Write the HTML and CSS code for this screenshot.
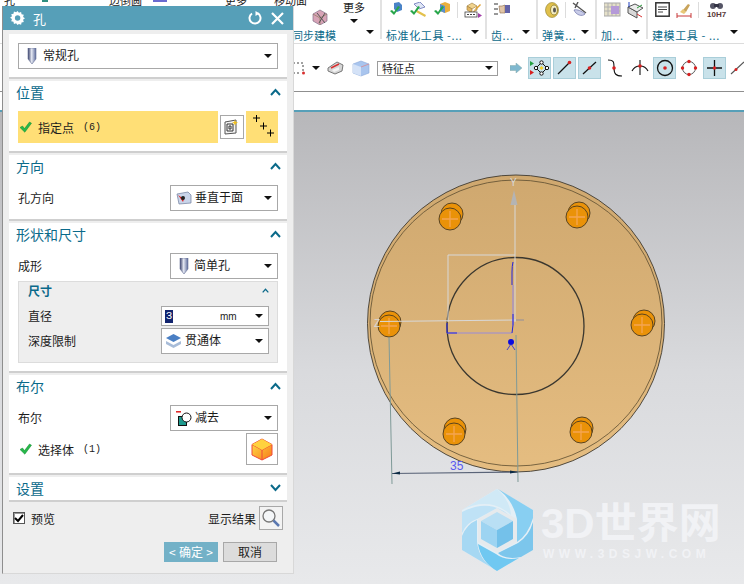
FILE: index.html
```html
<!DOCTYPE html>
<html lang="zh">
<head>
<meta charset="utf-8">
<title>孔</title>
<link rel="stylesheet" href="styles.css">
</head>
<body>
<svg class="defs" width="0" height="0" aria-hidden="true">
  <defs>
    <linearGradient id="drill" x1="0" x2="1" y1="0" y2="0"><stop offset="0" stop-color="#39406a"/><stop offset=".45" stop-color="#e4e8f2"/><stop offset="1" stop-color="#5c6a9a"/></linearGradient>
    <linearGradient id="view" x1="0" x2="0" y1="0" y2="1"><stop offset="0" stop-color="#b7b7ba"/><stop offset=".55" stop-color="#d9dadd"/><stop offset="1" stop-color="#e8e9eb"/></linearGradient>
    <linearGradient id="disc" x1="0" x2="0" y1="0" y2="1"><stop offset="0" stop-color="#cfa86f"/><stop offset="1" stop-color="#e5bd81"/></linearGradient>
    <linearGradient id="cubeface" x1="0" x2="1" y1="0" y2="1"><stop offset="0" stop-color="#ffe14a"/><stop offset="1" stop-color="#f77a18"/></linearGradient>
    <symbol id="i-drill" viewBox="0 0 10 16"><path d="M1 0h8v11l-4 5-4-5z" fill="url(#drill)" stroke="#6a7398" stroke-width=".6"/></symbol>
    <symbol id="i-check" viewBox="0 0 13 12"><path d="M1 6.500l2.500-1.500 2 2.600L10.500 1 12.500 2.200 5.800 11.200z" fill="#27b84a" stroke="#128a30" stroke-width=".5"/></symbol>
    <symbol id="i-up" viewBox="0 0 11 8"><path d="M1 7l4.500-5L10 7" fill="none" stroke="#0b6a8a" stroke-width="2"/></symbol>
  </defs>
</svg>

<div class="app">
  <header class="ribbon">
    <section class="rgroup rgroup-first">
      <div class="rgroup-body">
        <div class="first-left">
          <div class="clip-row">
            <span class="clip-a">孔</span>
            <span class="clip-mark"></span>
            <span class="clip-b">边倒圆</span>
            <span class="clip-flag"></span>
            <span class="clip-c">更多</span>
            <span class="clip-d">移动面</span>
          </div>
          <svg class="face-icon" width="18" height="17" viewBox="0 0 18 17"><path d="M2 6l7-4 7 4v7l-7 4-7-4z" fill="#d7a3b6" stroke="#85708a" stroke-width=".7"/><path d="M2 6l7 4 7-4M9 10v7" fill="none" stroke="#8a7b5c" stroke-width=".7"/><path d="M6 5l8 10M14 5L8 15" stroke="#555" stroke-width="1"/></svg>
        </div>
        <div class="more-col"><span>更多</span><i class="caret"></i></div>
      </div>
      <div class="rlabel rlabel-first"><span>同步建模</span><i class="caret"></i></div>
    </section>

    <section class="rgroup rg-std">
      <div class="rgroup-body icons">
        <svg width="14" height="15" viewBox="0 0 14 15"><path d="M5 1l5-1 3 3v5l-5 2-3-3z" fill="#4a83c7"/><path d="M1 9l2-1 2 2 4-6 2 1-6 8z" fill="#27a64a"/></svg>
        <svg width="18" height="15" viewBox="0 0 18 15"><path d="M5 2l6-2 5 5-6 2z" fill="#dfe6f5" stroke="#6a74b8" stroke-width=".8"/><path d="M8 8l9 5-1 2-9-5z" fill="#e3c14c"/><path d="M1 9l2-1 2 2 4-6 2 1-6 8z" fill="#27a64a"/></svg>
        <svg width="18" height="15" viewBox="0 0 18 15"><path d="M7 2l5-2 5 2v7l-5 2-5-2z" fill="#e9b03e"/><path d="M7 2l5 2v7l-5-2z" fill="#5a8fd0"/><path d="M1 9l2-1 2 2 4-6 2 1-6 8z" fill="#27a64a"/></svg>
        <i class="rsep"></i>
        <svg width="18" height="16" viewBox="0 0 18 16"><path d="M3 4l5-3 5 3-5 3z" fill="#f0d28c" stroke="#9c7b3a" stroke-width=".6"/><path d="M3 4v4l5 3V7zM13 4v4l-5 3" fill="#e3b763" stroke="#9c7b3a" stroke-width=".6"/><rect x="1" y="10" width="12" height="5" fill="#fff" stroke="#444" stroke-width=".8"/><path d="M3 12.500h2M6 12.500h2M9 12.500h2" stroke="#444"/><path d="M14 11l4 2.500-4 2.500z" fill="#a33fa8"/><path d="M12 6l4-4 1 1-4 4z" fill="#e0a030"/></svg>
      </div>
      <div class="rlabel"><span>标准化工具 -...</span><i class="caret"></i></div>
    </section>

    <section class="rgroup rg-gear">
      <div class="rgroup-body icons">
        <svg width="16" height="14" viewBox="0 0 16 14"><path d="M0 2h4M0 7h4M0 12h4" stroke="#333"/><path d="M5 4h3l3-1v8H6z" fill="#e2c6a8" stroke="#8a6a4a" stroke-width=".6"/><rect x="11" y="3" width="5" height="8" fill="#6464a8"/></svg>
      </div>
      <div class="rlabel"><span>齿...</span><i class="caret"></i></div>
    </section>

    <section class="rgroup rg-spring">
      <div class="rgroup-body icons">
        <svg width="14" height="16" viewBox="0 0 14 16"><ellipse cx="7" cy="8" rx="6.500" ry="7.500" fill="#e0c04c" stroke="#8a7a2a" stroke-width=".6"/><ellipse cx="9" cy="8" rx="3.500" ry="5" fill="#f4ecc0" stroke="#8a7a2a" stroke-width=".8"/><ellipse cx="9.500" cy="8" rx="1.500" ry="2.500" fill="#555"/></svg>
        <i class="rsep"></i>
        <svg width="15" height="15" viewBox="0 0 15 15"><path d="M1 1l13 10M6 0L3 6" stroke="#555" stroke-width="1.400"/><path d="M2 8c3-1 8 1 11 4-3 3-9 1-11-4z" fill="#c9cce8" stroke="#6a70a8" stroke-width=".7"/></svg>
      </div>
      <div class="rlabel"><span>弹簧...</span><i class="caret"></i></div>
    </section>

    <section class="rgroup rg-add">
      <div class="rgroup-body icons">
        <svg width="17" height="16" viewBox="0 0 17 16"><rect x="0" y="1" width="16" height="13" fill="#e5e0c8" stroke="#a8a8a8"/><path d="M4 1v13M8 1v13M12 1v13M0 5h16M0 9h16" stroke="#b0b0b0"/><rect x="7" y="4" width="8" height="8" fill="#b59ad8"/></svg>
        <svg width="17" height="17" viewBox="0 0 17 17"><path d="M1 5l9 5v6L1 11z" fill="#d8d8d8" stroke="#555"/><path d="M1 5l7-3 8 4-6 4z" fill="#ececec" stroke="#555"/><path d="M2 5V0" stroke="#2040c0"/><path d="M10 6l5-3" stroke="#2a9a3a"/><path d="M10 12l5 3" stroke="#d83030"/></svg>
      </div>
      <div class="rlabel"><span>加...</span><i class="caret"></i></div>
    </section>

    <section class="rgroup rg-model">
      <div class="rgroup-body icons">
        <svg width="15" height="15" viewBox="0 0 15 15"><rect x=".8" y=".8" width="13.400" height="13.400" fill="#fff" stroke="#333" stroke-width="1.500"/><path d="M3 5h9M3 7.500h9M3 10h5" stroke="#444"/></svg>
        <svg width="16" height="16" viewBox="0 0 16 16"><path d="M1 14h14M1 11v6M15 11v6" stroke="#c83a3a"/><path d="M7 8l5-6 2 1-4 7z" fill="#c8a35a"/><path d="M4 10l3-3 3 3-2 2z" fill="#e8c878"/></svg>
        <i class="rsep"></i>
        <div class="binoc"><svg width="13" height="8" viewBox="0 0 13 8"><circle cx="3" cy="4" r="3" fill="#556"/><circle cx="10" cy="4" r="3" fill="#556"/><rect x="4" y="2" width="5" height="3" fill="#334"/></svg><span>10H7</span></div>
      </div>
      <div class="rlabel"><span>建模工具 - ...</span><i class="caret"></i></div>
    </section>
  </header>

  <nav class="toolbar">
    <svg class="t-dash" width="12" height="13" viewBox="0 0 12 13"><path d="M0 1h10v10M0 11h8" fill="none" stroke="#444" stroke-dasharray="2 2"/><circle cx="10.500" cy="11" r="1.500" fill="#d83030"/></svg>
    <i class="caret t-caret"></i>
    <svg class="t-filter" width="17" height="14" viewBox="0 0 17 14"><path d="M1 7l9-6 6 3-1 6-7 3-7-3z" fill="#d6d6d6" stroke="#777"/><path d="M4 7l8-4" stroke="#d83030" stroke-width="1.400"/><path d="M5 9l7-3v3l-5 2z" fill="#f4f4f4"/></svg>
    <svg class="t-box" width="18" height="17" viewBox="0 0 18 17"><path d="M1 4l8-3 8 3v9l-8 3-8-3z" fill="#a9c5ee" stroke="#8aa8d8" stroke-width=".6"/><path d="M1 4l8 3v9l-8-3z" fill="#d4e2f7"/><path d="M9 7l8-3" stroke="#d88a90" stroke-width=".8"/></svg>
    <div class="t-select"><span>特征点</span><i class="caret"></i></div>
    <svg class="t-arrow" width="12" height="10" viewBox="0 0 12 10"><path d="M0 2.500h6V0l6 5-6 5V7.500H0z" fill="#7fb8cf" stroke="#8aa" stroke-width=".5"/></svg>
    <div class="tools">
      <div class="tool on"><svg width="23" height="22" viewBox="0 0 23 22"><path d="M2 4l4 2.500L2 9z" fill="#22a040"/><path d="M2 13l4 2.500L2 18z" fill="#d82020"/><path d="M13.500 5.500L19 11l-5.500 5.500L8 11z" fill="none" stroke="#111" stroke-width="1"/><path d="M13.500 9l2 2-2 2-2-2z" fill="#f4d020"/><circle cx="13.500" cy="5.500" r="1.700" fill="#fff" stroke="#111"/><circle cx="13.500" cy="16.500" r="1.700" fill="#fff" stroke="#111"/><circle cx="8" cy="11" r="1.700" fill="#fff" stroke="#111"/><circle cx="19" cy="11" r="1.700" fill="#fff" stroke="#111"/></svg></div>
      <div class="tool on"><svg width="23" height="22" viewBox="0 0 23 22"><path d="M5 17L16 6" stroke="#111" stroke-width="1.200"/><circle cx="16.500" cy="5.500" r="1.800" fill="#d82020"/></svg></div>
      <div class="tool on"><svg width="23" height="22" viewBox="0 0 23 22"><path d="M5 17L18 5" stroke="#111" stroke-width="1.200"/><circle cx="11.500" cy="11" r="1.800" fill="#d82020"/></svg></div>
      <div class="tool"><svg width="23" height="22" viewBox="0 0 23 22"><path d="M5 3c6 0 6 2 6 8s2 8 8 8" fill="none" stroke="#111" stroke-width="1.100"/><circle cx="11" cy="11" r="1.800" fill="#d82020"/></svg></div>
      <div class="tool"><svg width="23" height="22" viewBox="0 0 23 22"><path d="M4 14c2-4 5-5 8-5s6 1 8 5M12 3v15" fill="none" stroke="#111" stroke-width="1.100"/><circle cx="12" cy="9" r="1.800" fill="#d82020"/></svg></div>
      <div class="tool on"><svg width="23" height="22" viewBox="0 0 23 22"><circle cx="12" cy="11" r="7.500" fill="none" stroke="#111" stroke-width="1.300"/><circle cx="12" cy="11" r="1.800" fill="#d82020"/></svg></div>
      <div class="tool"><svg width="23" height="22" viewBox="0 0 23 22"><circle cx="11" cy="11" r="6.500" fill="none" stroke="#555" stroke-width="1"/><circle cx="11" cy="4.500" r="1.700" fill="#d82020"/><circle cx="11" cy="17.500" r="1.700" fill="#d82020"/><circle cx="4.500" cy="11" r="1.700" fill="#d82020"/><circle cx="17.500" cy="11" r="1.700" fill="#d82020"/></svg></div>
      <div class="tool on"><svg width="23" height="22" viewBox="0 0 23 22"><path d="M4 11h15M11.500 3v16" stroke="#111" stroke-width="1.300"/><circle cx="11.500" cy="11" r="1.700" fill="#d82020"/></svg></div>
      <div class="tool"><svg width="23" height="22" viewBox="0 0 23 22"><path d="M3 17L16 5" stroke="#555" stroke-width="1.100"/><circle cx="8" cy="12.500" r="1.500" fill="#d82020"/></svg></div>
    </div>
  </nav>
  <div class="strip"></div>

  <main class="viewport">
    <svg class="model" viewBox="0 112 744 472" width="744" height="472">
      <rect x="0" y="112" width="744" height="472" fill="url(#view)"/>
      <circle cx="516" cy="323.500" r="148.500" fill="url(#disc)" stroke="#3f3a30" stroke-width=".9"/>
      <ellipse cx="516" cy="323" rx="146" ry="143" fill="none" stroke="#5c4c30" stroke-width=".8"/>
      <circle cx="515.500" cy="326" r="68.500" fill="none" stroke="#3a372f" stroke-width="1.300"/>
      <g class="holes">
        <g><circle cx="452" cy="214" r="11"/><circle cx="450" cy="219" r="11"/><path d="M442 219h16M450 211v16"/></g>
        <g><circle cx="579" cy="213" r="11"/><circle cx="577" cy="217" r="11"/><path d="M569 217h16M577 209v16"/></g>
        <g><circle cx="390" cy="322" r="11"/><circle cx="389" cy="326" r="11"/><path d="M381 326h16M389 318v16"/></g>
        <g><circle cx="644" cy="321" r="11"/><circle cx="642" cy="325" r="11"/><path d="M634 325h16M642 317v16"/></g>
        <g><circle cx="455" cy="429" r="11"/><circle cx="454" cy="434" r="11"/><path d="M446 434h16M454 426v16"/></g>
        <g><circle cx="582" cy="428" r="11"/><circle cx="581" cy="432" r="11"/><path d="M573 432h16M581 424v16"/></g>
      </g>
      <path class="wcs" d="M448 322V255H515M515 200V322M380 321.500L516 320"/>
      <path class="wcs-end" d="M516 320h8"/>
      <path class="y-tip" d="M514 190l3.500 15h-7z"/>
      <text class="axis" x="510" y="186">Y</text>
      <text class="axis" x="374" y="327">Z</text>
      <path class="lav" d="M447 333H512M513 285V325"/>
      <path class="blue" d="M513 262q-1 4-1 10v13M513 314V325l-1 8M447 323v10h10"/>
      <circle cx="511" cy="342" r="3" fill="#0a0ae0"/>
      <path class="blue thin" d="M507 350l4-6 4 6"/>
      <path class="dimline" d="M389 337l3 147M516 335l2 147"/>
      <path class="dimbar" d="M392 473.500L518 472"/>
      <path d="M392 473.500l8-2v3zM518 472l-8-1.500v3z" fill="#0b2a44"/>
      <text class="dimtext" x="450" y="470">35</text>
      <g class="logo">
        <path d="M497 489l36 21v40l-36 21-35-21v-40z" fill="#e4eff6"/>
        <path d="M497 508l20 11v23l-20 11-19-11v-23z" fill="#e6eaed"/>
        <path d="M497 489L462 510Q490 496 511 515Q510 500 497 489z" fill="#d0e9f6"/>
        <path d="M498 489Q513 500 517 519V542Q528 535 533 518V510z" fill="#88cff2"/>
        <path d="M518 543Q529 536 533 522V550L521 557Q505 560 498 553z" fill="#7cc6ec"/>
        <path d="M478 544L496 554Q505 561 519 558L497 571Q481 562 478 544z" fill="#70c8f1"/>
        <path d="M462 536Q467 524 477 520V542Q479 560 494 569L462 550z" fill="#a6d8f3"/>
        <path d="M462 512Q489 498 509 515L497 508L477 519Q467 522 462 533z" fill="#bfe2f6"/>
        <path d="M497 512l16 9-16 9-16-9z" fill="#b9dff4"/>
        <path d="M481 521l16 9v18l-16-9z" fill="#9dd4f2"/>
        <path d="M513 521l-16 9v18l16-9z" fill="#74c1ea"/>
      </g>
      <text class="wm-big" x="541" y="538">3D世界网</text>
      <text class="wm-small" x="543" y="558">WWW.3DSJW.COM</text>
    </svg>
  </main>

  <aside class="dialog">
    <div class="titlebar">
      <svg width="16" height="16" viewBox="0 0 16 16"><path d="M8 1l1.500 2 2.300-.8.500 2.400 2.400.5-.8 2.300 2 1.500-2 1.500.8 2.300-2.400.5-.5 2.400-2.300-.8L8 16l-1.500-1.900-2.300.8-.5-2.400-2.400-.5.8-2.300-2-1.500 2-1.500-.8-2.300 2.400-.5.500-2.400 2.300.8z" fill="#fff" transform="scale(.94)"/><circle cx="7.600" cy="8" r="2.700" fill="#569fb8"/></svg>
      <span class="title">孔</span>
      <svg class="t-reset" width="14" height="14" viewBox="0 0 14 14"><path d="M4 2.500a5.500 5.500 0 1 0 5.500-.3" fill="none" stroke="#fff" stroke-width="2"/><path d="M7.500 0v5l4-2.500z" fill="#fff"/></svg>
      <svg class="t-close" width="13" height="13" viewBox="0 0 13 13"><path d="M1 1l11 11M12 1L1 12" stroke="#fff" stroke-width="2.200"/></svg>
    </div>

    <div class="dialog-body">
      <section class="sec sec-type">
        <div class="select wide"><svg class="sel-icon" width="10" height="16"><use href="#i-drill"/></svg><span>常规孔</span><i class="caret"></i></div>
      </section>

      <section class="sec">
        <div class="sec-head"><h2>位置</h2><svg width="11" height="8"><use href="#i-up"/></svg></div>
        <div class="point-row">
          <div class="point-main"><svg width="13" height="12"><use href="#i-check"/></svg><span>指定点</span><span class="count">(6)</span></div>
          <div class="square-btn"><svg width="16" height="16" viewBox="0 0 16 16"><path d="M1 3l11-2v13L1 15z" fill="#f4f4f4" stroke="#555"/><path d="M3 5h6v7H3zM5 7h2v3H5z" fill="none" stroke="#333"/><path d="M11 1l1 2 2 .5-2 1-1 2-1-2-2-1 2-.5z" fill="#f0c020"/></svg></div>
          <div class="point-add"><svg width="24" height="24" viewBox="0 0 24 24"><path d="M3 3h7M6.500 0v7M10 11h7M13.500 7.500v7M17 18h7M20.500 14.500v7" stroke="#000" stroke-width="1"/></svg></div>
        </div>
      </section>

      <section class="sec">
        <div class="sec-head"><h2>方向</h2><svg width="11" height="8"><use href="#i-up"/></svg></div>
        <div class="row">
          <label>孔方向</label>
          <div class="select"><svg class="sel-icon wide-icon" width="16" height="14" viewBox="0 0 16 14"><path d="M1 3l11-2 3 3v8l-12 1z" fill="#c9d5ea" stroke="#6f7c9c" stroke-width=".7"/><path d="M2 4l6 4-1 3z" fill="#e02020"/><circle cx="7" cy="7" r="2" fill="#222"/></svg><span>垂直于面</span><i class="caret"></i></div>
        </div>
      </section>

      <section class="sec">
        <div class="sec-head"><h2>形状和尺寸</h2><svg width="11" height="8"><use href="#i-up"/></svg></div>
        <div class="row">
          <label>成形</label>
          <div class="select"><svg class="sel-icon" width="10" height="16"><use href="#i-drill"/></svg><span>简单孔</span><i class="caret"></i></div>
        </div>
        <div class="panel">
          <div class="panel-head"><h3>尺寸</h3><svg width="7" height="5" viewBox="0 0 11 8"><use href="#i-up"/></svg></div>
          <div class="panel-row">
            <label>直径</label>
            <div class="num"><b>3</b><em>mm</em><i class="caret"></i></div>
          </div>
          <div class="panel-row tight">
            <label>深度限制</label>
            <div class="select small"><svg class="sel-icon" width="15" height="15" viewBox="0 0 15 15"><path d="M0 4l7.500-4L15 4l-7.500 4z" fill="#4a7fc4"/><path d="M0 7l7.500 4L15 7v3l-7.500 4L0 10z" fill="#a8bcd8"/></svg><span>贯通体</span><i class="caret"></i></div>
          </div>
        </div>
      </section>

      <section class="sec">
        <div class="sec-head"><h2>布尔</h2><svg width="11" height="8"><use href="#i-up"/></svg></div>
        <div class="row">
          <label>布尔</label>
          <div class="select"><svg class="sel-icon wide-icon" width="16" height="15" viewBox="0 0 16 15"><path d="M0 .800h5" stroke="#e02020" stroke-width="1.500"/><rect x="2.500" y="5.500" width="8" height="9" fill="#1f9a8e" stroke="#111"/><circle cx="10.500" cy="6.500" r="4.500" fill="#fff" stroke="#111"/></svg><span>减去</span><i class="caret"></i></div>
        </div>
        <div class="body-row">
          <div class="body-main"><svg width="13" height="12"><use href="#i-check"/></svg><span>选择体</span><span class="count">(1)</span></div>
          <div class="cube-btn"><svg width="22" height="23" viewBox="0 0 22 23"><path d="M11 1l10 5.500v10.500L11 22 1 17V6.500z" fill="url(#cubeface)" stroke="#f0483a"/><path d="M1 6.500L11 12l10-5.500M11 12v10" fill="none" stroke="#f0483a"/><path d="M11 1l10 5.500L11 12 1 6.500z" fill="#ffd23e"/></svg></div>
        </div>
      </section>

      <section class="sec sec-closed">
        <div class="sec-head"><h2>设置</h2><svg width="11" height="8" viewBox="0 0 11 8"><path d="M1 1l4.500 5L10 1" fill="none" stroke="#0b6a8a" stroke-width="2"/></svg></div>
      </section>

      <div class="footer">
        <div class="foot-row">
          <span class="checkbox"><svg width="10" height="10" viewBox="0 0 10 10"><path d="M1 5l3 3 5-6" fill="none" stroke="#000" stroke-width="2"/></svg></span>
          <label class="preview">预览</label>
          <label class="result">显示结果</label>
          <div class="search"><svg width="20" height="20" viewBox="0 0 20 20"><circle cx="8" cy="8" r="6" fill="#f4f6f8" stroke="#777" stroke-width="1.300"/><path d="M12.500 12.500L18 18" stroke="#5a78b0" stroke-width="2.500"/></svg></div>
        </div>
        <div class="foot-btns">
          <button class="btn ok" type="button"><span>&lt;</span>确定<span>&gt;</span></button>
          <button class="btn" type="button">取消</button>
        </div>
      </div>
    </div>
  </aside>
</div>
</body>
</html>
```

FILE: styles.css
```css
* { box-sizing: border-box; }
html, body { margin: 0; padding: 0; }
body {
  width: 744px;
  height: 584px;
  overflow: hidden;
  background: #fff;
  font-family: "Noto Sans CJK SC", "Liberation Sans", sans-serif;
  font-size: 12px;
  color: #1c1c1c;
}
.defs { position: absolute; }
.app { position: relative; width: 744px; height: 584px; display: flex; flex-direction: column; overflow: hidden; }
.caret { display: block; flex: none; width: 0; height: 0; border-left: 4px solid transparent; border-right: 4px solid transparent; border-top: 4px solid #111; }

/* ribbon */
.ribbon { height: 44px; display: flex; flex: none; border-bottom: 1px solid #dcdcdc; background: #fff; overflow: hidden; }
.rgroup { display: flex; flex-direction: column; flex: none; border-right: 2px solid #e2e2e2; height: 39px; }
.rgroup:last-child { border-right: none; }
.rgroup-first { width: 382px; }
.rg-std { width: 105px; }
.rg-gear { width: 51px; }
.rg-spring { width: 59px; }
.rg-add { width: 51px; }
.rg-model { width: 96px; }
.rgroup-body { height: 29px; flex: none; display: flex; }
.icons { align-items: flex-start; padding: 2px 0 0 7px; gap: 6px; }
.rsep { display: block; width: 1px; height: 16px; background: #dcdcdc; }
.first-left { width: 345px; height: 27px; overflow: hidden; }
.clip-row { display: flex; height: 8px; overflow: hidden; line-height: 14px; font-size: 11px; color: #222; }
.clip-row span { display: block; margin-top: -7px; height: 16px; flex: none; }
.clip-a { margin-left: 4px; width: 12px; }
.clip-row .clip-mark { margin: 0 0 0 26px; width: 6px; height: 2px; background: #2f8f80; }
.clip-b { margin-left: 61px; width: 33px; }
.clip-row .clip-flag { margin: 0 0 0 11px; width: 14px; height: 2px; background: #6a6ad0; }
.clip-c { margin-left: 58px; width: 22px; }
.clip-d { margin-left: 27px; width: 33px; }
.face-icon { display: block; margin: 0 0 0 311px; }
.more-col { display: flex; flex-direction: column; align-items: center; width: 34px; margin-left: -8px; font-size: 11px; line-height: 14px; }
.more-col .caret { margin-top: 5px; }
.rlabel { height: 12px; flex: none; display: flex; align-items: center; justify-content: space-between; padding: 0 6px 0 4px; font-size: 11px; line-height: 12px; color: #0b6a8a; white-space: nowrap; }
.rlabel span { letter-spacing: .6px; }
.rlabel .caret { margin-bottom: 7px; }
.rlabel-first { padding-left: 292px; }
.rlabel-first span { letter-spacing: 0; }

/* toolbar */
.toolbar { height: 48px; flex: none; border-bottom: 1px solid #8f8f8f; background: #fff; display: flex; align-items: center; padding: 1px 0 0 293px; }
.toolbar > * { flex: none; }
.t-caret { margin-left: 7px; }
.t-filter { margin-left: 7px; }
.t-box { margin-left: 8px; }
.t-select { margin-left: 7px; width: 121px; height: 15px; border: 1px solid #9c9c9c; display: flex; align-items: center; justify-content: space-between; padding: 0 4px; font-size: 11px; line-height: 13px; }
.t-arrow { margin-left: 12px; }
.tools { display: flex; gap: 2px; margin-left: 6px; }
.tool { width: 23px; height: 22px; flex: none; }
.tool svg { display: block; }
.tool.on { background: #c9e2ea; box-shadow: inset 0 0 0 1px #a9ced9; }
.strip { height: 20px; flex: none; background: #fff; border-bottom: 2px solid #569fb8; }

/* viewport */
.viewport { flex: 1; min-height: 0; }
.model { display: block; }
.holes circle { fill: #ea9208; stroke: #4a3a20; stroke-width: .9; }
.holes path { fill: none; stroke: #f5a552; stroke-width: 1.300; }
.wcs { fill: none; stroke: #d8d8d8; stroke-width: 1; }
.wcs-end { fill: none; stroke: #a89a90; stroke-width: 1.500; }
.y-tip { fill: #b4b4b4; }
.axis { font-family: "Liberation Sans", sans-serif; font-size: 10px; fill: #d8d8d8; }
.blue { fill: none; stroke: #2222dd; stroke-width: 1; }
.lav { fill: none; stroke: #9a8cd8; stroke-width: 1.200; }
.blue.thin { stroke-width: .8; }
.dimline { fill: none; stroke: #7f9a98; stroke-width: 1; }
.dimbar { fill: none; stroke: #5a6478; stroke-width: 1.200; }
.dimtext { font-family: "Liberation Sans", sans-serif; font-size: 12px; fill: #5a5af0; }
.wm-big { font-family: "Liberation Sans", "Noto Sans CJK SC", sans-serif; font-weight: 700; font-size: 42px; fill: #f1f2f5; }
.wm-small { font-family: "Liberation Sans", sans-serif; font-size: 12px; font-weight: 700; letter-spacing: 4.500px; fill: #f1f2f5; }

/* dialog */
.dialog { position: absolute; left: 2px; top: 6px; width: 292px; height: 568px; background: #eee; border-left: 1px solid #8e8e8e; border-right: 1px solid #d8d8d8; border-bottom: 1px solid #d8d8d8; display: flex; flex-direction: column; }
.titlebar { height: 24px; flex: none; background: #569fb8; display: flex; align-items: center; padding: 0 9px 0 7px; color: #fff; }
.title { font-size: 13px; margin-left: 7px; flex: 1; }
.t-close { margin-left: 9px; }
.dialog-body { flex: 1; padding: 4px 6px 0 6px; display: flex; flex-direction: column; gap: 2px; }
.sec { background: #fff; border-bottom: 2px solid #cfcfcf; padding: 0 9px 8px 9px; }
.sec-type { padding-top: 9px; }
.sec-closed { padding-bottom: 0; }
.sec-head { height: 30px; display: flex; align-items: center; justify-content: space-between; margin: 0 -3px 0 -2px; padding: 0 0 8px 0; color: #0b6a8a; }
.sec-closed .sec-head { height: 23px; padding: 0 0 2px 0; }
.sec-head h2 { margin: 0; font-size: 14px; font-weight: 400; line-height: 20px; }
.select { width: 108px; height: 26px; border: 1px solid #a8a8a8; background: #fff; display: flex; align-items: center; padding: 0 5px 0 8px; font-size: 12px; line-height: 16px; }
.select.wide { width: 100%; }
.select span { margin-left: 5px; flex: 1; white-space: nowrap; padding-bottom: 2px; }
.select.wide span { margin-left: 6px; }
.wide-icon { margin-left: -3px; }
.wide-icon + span { margin-left: 3px; }
.sel-icon { flex: none; display: block; }
.row { display: flex; align-items: center; justify-content: space-between; }
.row label, .panel-row label { font-size: 12px; padding-bottom: 2px; }
.point-row { display: flex; gap: 2px; height: 32px; align-items: center; }
.point-main { width: 200px; height: 32px; background: #ffdf76; display: flex; align-items: center; padding-left: 1px; }
.point-main span:nth-child(2), .body-main span:nth-child(2) { margin-left: 6px; }
.count { margin-left: 9px; font-family: "Liberation Mono", monospace; font-size: 10px; }
.square-btn { width: 24px; height: 24px; border: 1px solid #a8a8a8; display: flex; align-items: center; justify-content: center; }
.point-add { width: 32px; height: 32px; background: #ffdf76; display: flex; align-items: center; justify-content: center; }
.panel { margin-top: 2px; height: 82px; background: #eee; border: 1px solid #dcdcdc; padding: 0 8px 0 9px; }
.panel-head { height: 24px; display: flex; align-items: center; justify-content: space-between; padding-bottom: 7px; }
.panel-head h3 { margin: 0; font-size: 12px; line-height: 16px; font-weight: 700; color: #0b6a8a; }
.panel-row { display: flex; align-items: center; justify-content: space-between; height: 20px; }
.panel-row.tight { margin-top: 2px; height: 26px; }
.num { width: 108px; height: 20px; border: 1px solid #a8a8a8; background: #fff; display: flex; align-items: center; padding: 0 5px 0 3px; }
.num b { width: 8px; height: 13px; background: #12246e; color: #fff; font-family: "Liberation Mono", monospace; font-size: 11px; font-weight: 400; line-height: 13px; text-align: center; }
.num em { margin-left: 47px; flex: 1; font-family: "Liberation Sans", sans-serif; font-style: normal; font-size: 10px; color: #1c1c1c; }
.select.small { padding-left: 4px; }
.select.small span { margin-left: 4px; }
.body-row { margin-top: 2px; height: 32px; display: flex; align-items: center; justify-content: space-between; }
.body-main { display: flex; align-items: center; padding-left: 1px; }
.cube-btn { width: 32px; height: 32px; border: 1px solid #a8a8a8; display: flex; align-items: center; justify-content: center; }
.footer { flex: 1; display: flex; flex-direction: column; padding: 2px 4px 0 4px; }
.foot-row { height: 24px; display: flex; align-items: center; }
.checkbox { width: 12px; height: 12px; border: 1px solid #555; background: #fff; display: flex; align-items: center; justify-content: center; box-shadow: inset 1px 1px 0 #999; }
.preview { margin-left: 6px; flex: 1; }
.result { margin-right: 3px; }
.search { width: 24px; height: 24px; border: 1px solid #a8a8a8; background: #f3f3f3; display: flex; align-items: center; justify-content: center; }
.foot-btns { margin-top: 12px; display: flex; justify-content: flex-end; gap: 5px; padding-right: 6px; }
.btn { width: 54px; height: 20px; padding: 0; border: 1px solid #a8a8a8; background: #dcdcdc; color: #1c1c1c; font-family: inherit; font-size: 12px; line-height: 16px; display: flex; align-items: center; justify-content: center; }
.btn.ok { background: #73b1c7; border-color: #73b1c7; color: #fff; justify-content: space-between; padding: 0 4px; }
.binoc { display: flex; flex-direction: column; align-items: center; color: #5a3a3a; font-family: "Liberation Sans", sans-serif; font-size: 8px; font-weight: 700; line-height: 9px; margin-left: 2px; }
```
